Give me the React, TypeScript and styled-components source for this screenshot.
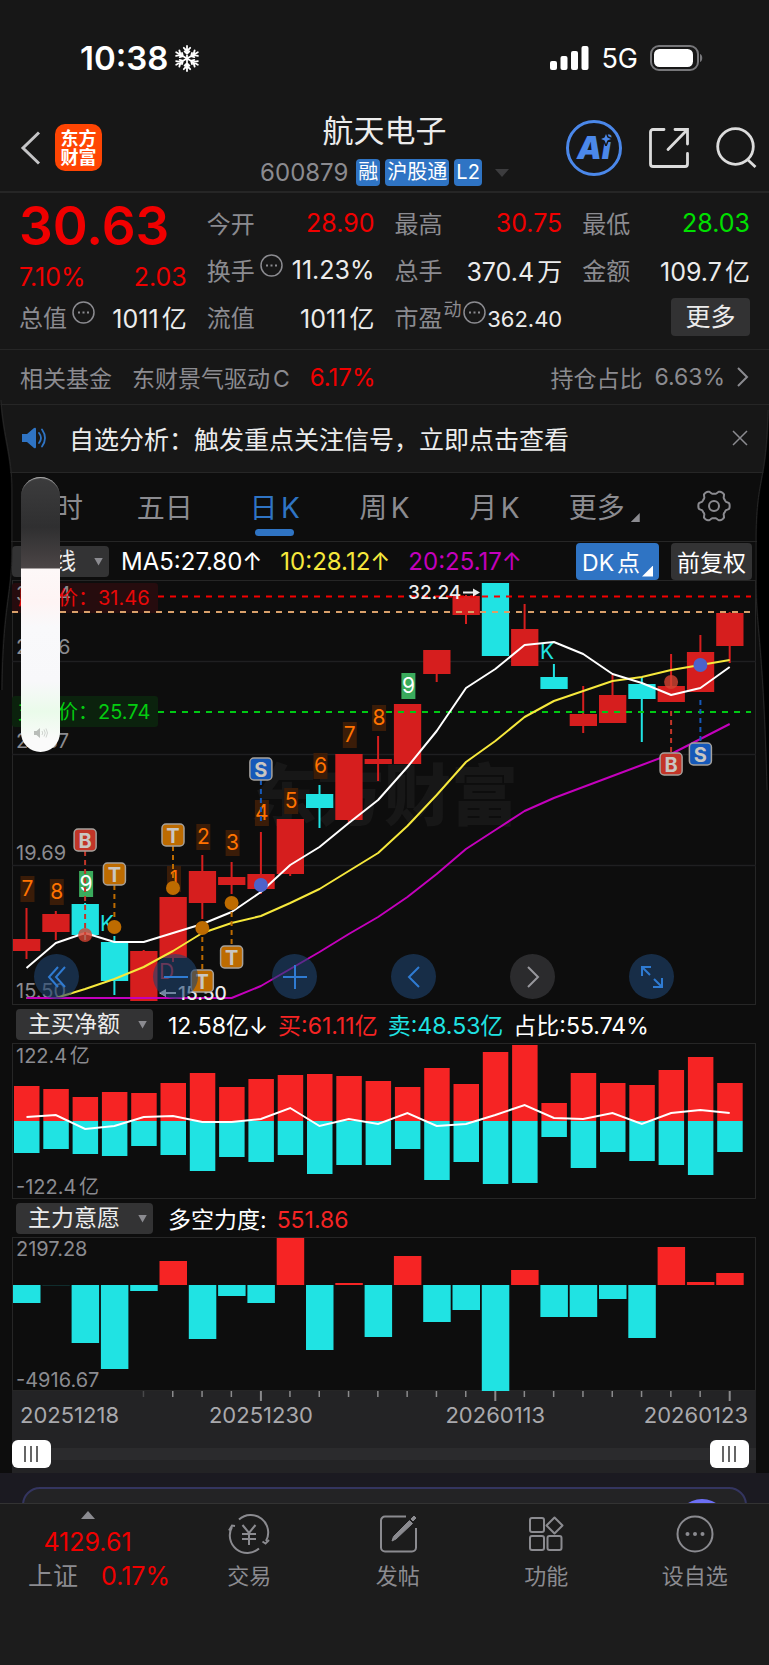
import React from 'react';
import styled, { createGlobalStyle } from 'styled-components';

const c = {
  bg: '#171717',
  chart: '#0d0d0d',
  line: '#262626',
  grid: '#1f1f21',
  muted: '#8b8b90',
  text: '#ececec',
  red: '#f00000',
  green: '#00e000',
  blue: '#2f74c4',
  candleRed: '#d61e1e',
  barRed: '#f62424',
  cyan: '#20e3e3',
  yellow: '#f6e83c',
  purple: '#c400bc',
  chip: '#333334',
};

const Global = createGlobalStyle`
  *, *::before, *::after { box-sizing: border-box; }
  html { background: #1c1c1c; }
  body { margin: 0; font-family: Inter, "Noto Sans CJK SC", sans-serif; color: ${c.text}; }
  button, select, input { font: inherit; color: inherit; margin: 0; }
  button { border: 0; padding: 0; background: none; cursor: pointer; }
  a { color: inherit; text-decoration: none; }
  svg { display: block; }
  dl, dd, dt, h1, p { margin: 0; font-weight: 400; }
`;

const Page = styled.div`
  position: relative;
  display: flex;
  flex-direction: column;
  min-height: 100vh;
  background: ${c.bg};
  overflow: hidden;
`;

/* ---------- status bar ---------- */
const StatusBar = styled.div`
  display: flex;
  align-items: center;
  height: 82px;
  padding: 34px 65px 0 80px;
  color: #fff;
`;
const Clock = styled.time`
  font-size: 33px;
  font-weight: 600;
  margin-right: 6px;
`;
const StatusRight = styled.div`
  display: flex;
  align-items: center;
  gap: 12px;
  margin-left: auto;
  font-size: 27px;
`;

/* ---------- header ---------- */
const Header = styled.header`
  display: grid;
  grid-template-columns: minmax(0, 1fr) auto minmax(0, 1fr);
  align-items: center;
  height: 111px;
  padding: 22px 12px 0 12px;
  border-bottom: 2px solid ${c.line};
`;
const HeaderSide = styled.div<{ $end?: boolean }>`
  display: flex;
  align-items: center;
  gap: ${(p) => (p.$end ? 27 : 14)}px;
  justify-content: ${(p) => (p.$end ? 'flex-end' : 'flex-start')};
  padding-left: ${(p) => (p.$end ? 0 : 8)}px;
`;
const Logo = styled.a`
  display: grid;
  place-content: center;
  width: 47px;
  height: 47px;
  border-radius: 10px;
  background: #ff4503;
  color: #fff;
  font-size: 18px;
  font-weight: 700;
  line-height: 19px;
`;
const TitleBlock = styled.div`
  display: flex;
  flex-direction: column;
  align-items: center;
  gap: 6px;
`;
const Title = styled.h1`
  font-size: 31px;
  line-height: 44px;
`;
const CodeRow = styled.div`
  display: flex;
  align-items: center;
  gap: 5px;
  font-size: 24px;
  line-height: 27px;
  color: ${c.muted};
`;
const Code = styled.span`
  margin-right: 3px;
`;
const Tag = styled.span`
  padding: 0 2px;
  border-radius: 4px;
  background: ${c.blue};
  color: #fff;
  font-size: 20px;
`;
const Caret = styled.button`
  margin-left: 8px;
`;
const AiButton = styled.button`
  position: relative;
  width: 56px;
  height: 56px;
  border: 3px solid #4b88ea;
  border-radius: 50%;
  color: #4b88ea;
  font-size: 31px;
  font-weight: 900;
  font-style: italic;
  line-height: 50px;
`;
const Spark = styled.svg`
  position: absolute;
  right: 6px;
  top: 9px;
`;

/* ---------- quote ---------- */
const Quote = styled.section`
  display: grid;
  grid-template-columns: repeat(4, minmax(0, 1fr));
  grid-auto-rows: 47px;
  column-gap: 20px;
  padding: 6px 19px 9px;
  border-bottom: 1px solid ${c.line};
`;
const PriceBlock = styled.div`
  grid-row: span 2;
  color: ${c.red};
`;
const Price = styled.div`
  font-size: 53px;
  font-weight: 600;
  line-height: 55px;
`;
const Change = styled.div`
  display: flex;
  justify-content: space-between;
  padding-top: 5px;
  font-size: 25px;
  line-height: 36px;
`;
const Stat = styled.dl`
  display: flex;
  align-items: center;
  font-size: 24px;
  white-space: nowrap;
`;
const StatLabel = styled.dt`
  display: flex;
  align-items: center;
  gap: 5px;
  color: ${c.muted};
`;
const StatValue = styled.dd<{ $color?: string; $small?: boolean }>`
  margin-left: auto;
  padding-top: ${(p) => (p.$small ? 4 : 0)}px;
  font-size: ${(p) => (p.$small ? 22 : 25)}px;
  text-autospace: normal;
  color: ${(p) => p.$color ?? c.text};
`;
const Sup = styled.sup`
  align-self: flex-start;
  margin: 2px -4px 0;
  font-size: 18px;
  line-height: 18px;
`;
const InfoButton = styled.button`
  padding-bottom: 8px;
`;
const MoreButton = styled.button`
  justify-self: end;
  align-self: center;
  width: 79px;
  height: 38px;
  border-radius: 4px;
  background: #323233;
  font-size: 25px;
  line-height: 36px;
`;

const FundRow = styled.a`
  display: flex;
  align-items: center;
  height: 55px;
  padding: 0 20px;
  border-bottom: 1px solid ${c.line};
  color: ${c.muted};
  font-size: 23px;
  text-autospace: normal;
`;
const FundName = styled.span`
  margin: 0 20px;
`;
const FundChange = styled.span`
  color: ${c.red};
  font-size: 24px;
`;
const FundShare = styled.span`
  display: flex;
  align-items: center;
  gap: 12px;
  margin-left: auto;
`;

const Notice = styled.div`
  display: flex;
  align-items: center;
  height: 68px;
  padding: 0 20px 2px;
  border-bottom: 1px solid ${c.line};
  font-size: 25px;
`;
const NoticeText = styled.p`
  flex: 1;
  margin-left: 21px;
`;

/* ---------- chart area ---------- */
const ChartArea = styled.main`
  background: ${c.chart};
`;
const Tabs = styled.nav`
  display: grid;
  grid-template-columns: repeat(7, 1fr);
  height: 69px;
  border-bottom: 1px solid ${c.line};
`;
const Tab = styled.button<{ $active?: boolean }>`
  position: relative;
  display: flex;
  align-items: center;
  justify-content: center;
  gap: 6px;
  padding-bottom: 2px;
  font-size: 28px;
  text-autospace: normal;
  color: ${(p) => (p.$active ? c.blue : c.muted)};
  &::after {
    content: '';
    display: ${(p) => (p.$active ? 'block' : 'none')};
    position: absolute;
    bottom: 5px;
    width: 39px;
    height: 7px;
    border-radius: 4px;
    background: ${c.blue};
  }
`;
const Corner = styled.i<{ $size: number }>`
  align-self: flex-end;
  width: ${(p) => p.$size}px;
  height: ${(p) => p.$size}px;
  background: currentColor;
  clip-path: polygon(100% 0, 100% 100%, 0 100%);
`;
const TabCorner = styled(Corner)`
  margin-bottom: 17px;
`;
const IndicatorRow = styled.div<{ $first?: boolean }>`
  display: flex;
  align-items: center;
  height: 38px;
  padding: 0 17px 0 ${(p) => (p.$first ? 12 : 16)}px;
  font-size: 23px;
  white-space: nowrap;
`;
const Values = styled.div<{ $wide?: boolean }>`
  display: flex;
  align-items: baseline;
  gap: ${(p) => (p.$wide ? 18 : 10)}px;
  margin-left: ${(p) => (p.$wide ? 12 : 15)}px;
  font-size: ${(p) => (p.$wide ? 24 : 23)}px;
`;
const Picker = styled.div`
  position: relative;
  &::after {
    content: '';
    position: absolute;
    right: 6px;
    top: 12px;
    width: 9px;
    height: 8px;
    background: ${c.muted};
    clip-path: polygon(0 0, 100% 0, 50% 100%);
    pointer-events: none;
  }
`;
const Select = styled.select<{ $indent: number }>`
  display: block;
  appearance: none;
  height: 31px;
  padding: 0 33px 0 ${(p) => p.$indent}px;
  border: 0;
  border-radius: 4px;
  background: ${c.chip};
  color: ${c.text};
  font-size: 23px;
  line-height: 31px;
`;
const Val = styled.span<{ $color: string }>`
  color: ${(p) => p.$color};
`;
const RowButtons = styled.div`
  display: flex;
  gap: 12px;
  margin-left: auto;
`;
const RowButton = styled.button<{ $blue?: boolean }>`
  display: flex;
  align-items: center;
  justify-content: center;
  gap: 2px;
  height: 37px;
  padding: 0 6px;
  border-radius: 4px;
  background: ${(p) => (p.$blue ? c.blue : c.chip)};
  color: #fff;
  text-autospace: normal;
`;
const ButtonCorner = styled(Corner)`
  margin-bottom: 3px;
`;
const Plot = styled.div`
  position: relative;
  margin: 0 13px 0 12px;
`;
const Drawing = styled.svg`
  width: 100%;
  height: auto;
  text-autospace: normal;
`;
const Controls = styled.div`
  position: absolute;
  left: 3%;
  right: 11%;
  bottom: 6px;
  display: flex;
  justify-content: space-between;
`;
const RoundButton = styled.button<{ $off?: boolean }>`
  display: grid;
  place-items: center;
  width: 45px;
  height: 45px;
  border-radius: 50%;
  color: ${(p) => (p.$off ? '#98989d' : '#2f7bd2')};
  background: ${(p) => (p.$off ? '#2b2b2d' : 'rgba(30, 66, 110, 0.6)')};
`;

const Axis = styled.div`
  margin: 0 13px 0 12px;
  padding-bottom: 5px;
  background: #232325;
`;
const RangeBox = styled.div`
  position: relative;
  height: 28px;
  background: linear-gradient(#2b2b2d, #2b2b2d) center / 100% 12px no-repeat;
`;
const RangeInput = styled.input`
  position: absolute;
  inset: 0;
  width: 100%;
  height: 28px;
  appearance: none;
  background: none;
  pointer-events: none;
  &::-webkit-slider-thumb {
    appearance: none;
    pointer-events: auto;
    width: 39px;
    height: 28px;
    border-radius: 6px;
    background:
      linear-gradient(#666, #666) 12px 6px / 2px 16px no-repeat,
      linear-gradient(#666, #666) 18px 6px / 2px 16px no-repeat,
      linear-gradient(#666, #666) 24px 6px / 2px 16px no-repeat,
      #fff;
  }
`;

/* ---------- below the chart ---------- */
const Promo = styled.section`
  height: 30px;
  padding: 14px 22px 0;
  background: #1b1a21;
  overflow: hidden;
`;
const PromoCard = styled.div`
  display: flex;
  justify-content: flex-end;
  height: 60px;
  padding: 10px 17px;
  border: 2px solid #343560;
  border-radius: 18px;
  background: #232325;
`;
const PromoOrb = styled.span`
  width: 52px;
  height: 52px;
  flex: none;
  border-radius: 50%;
  background: #6c6ff5;
`;

const BottomNav = styled.nav`
  display: grid;
  grid-template-columns: 175px repeat(4, minmax(0, 1fr));
  flex: 1;
  align-items: start;
  min-height: 162px;
  border-top: 1px solid #333;
  background: #1c1c1c;
  color: ${c.muted};
`;
const IndexBox = styled.a`
  display: flex;
  flex-direction: column;
  align-items: center;
  padding-top: 7px;
  font-size: 25px;
`;
const IndexValue = styled.span`
  line-height: 46px;
  color: ${c.red};
`;
const IndexRow = styled.span`
  display: flex;
  gap: 23px;
  align-self: flex-start;
  padding-left: 28px;
  line-height: 22px;
`;
const NavItem = styled.a`
  display: flex;
  flex-direction: column;
  align-items: center;
  gap: 6px;
  padding-top: 10px;
  font-size: 22px;
  line-height: 32px;
`;

/* ---------- overlays ---------- */
const BezelEdge = styled.svg<{ $right?: boolean }>`
  position: absolute;
  top: 390px;
  ${(p) => (p.$right ? 'right: 0;' : 'left: 0;')}
  pointer-events: none;
`;
const VolumeHud = styled.div`
  position: absolute;
  left: 21px;
  top: 477px;
  width: 39px;
  height: 275px;
`;
const VolumeInput = styled.input`
  display: block;
  appearance: none;
  writing-mode: vertical-lr;
  direction: rtl;
  width: 39px;
  height: 275px;
  border-radius: 20px;
  box-shadow: inset 0 2px 1px -1px rgba(255, 255, 255, 0.6);
  background: linear-gradient(
    #3c3c3d 0,
    #2f2f30 50px,
    #4b4546 91px,
    #fdf8f8 92px,
    #fef4f4 125px,
    #f9f9fb 150px,
    #f8f8fa 205px,
    #eafbea 235px,
    #fafafa 262px
  );
  &::-webkit-slider-thumb {
    appearance: none;
    width: 39px;
    height: 2px;
    background: none;
  }
`;
const VolumeIcon = styled.svg`
  position: absolute;
  left: 13px;
  bottom: 14px;
  pointer-events: none;
`;

/* ---------- chart data ---------- */
const STEP = 29.3;
const cx = (i: number) => 14.5 + i * STEP;

// [rising, body top, body bottom, wick top, wick bottom]
const candles: [number, number, number, number, number][] = [
  [1, 359, 371, 328, 379], [1, 334, 352, 331, 360], [0, 324, 355, 323, 360],
  [0, 362, 401, 356, 415], [1, 371, 421, 370, 421], [1, 317, 378, 317, 382],
  [1, 291, 323, 275, 339], [1, 297, 305, 282, 314], [1, 294, 309, 252, 314],
  [1, 239, 294, 239, 296], [0, 214, 228, 205, 248], [1, 174, 240, 174, 242],
  [1, 179, 184, 156, 201], [1, 124, 184, 124, 184], [1, 70, 94, 70, 102],
  [1, 16, 35, 15, 44], [0, 3, 76, 3, 76], [1, 49, 86, 24, 86],
  [0, 97, 109, 84, 109], [1, 134, 146, 106, 153], [1, 115, 143, 95, 143],
  [0, 104, 119, 97, 162], [1, 106, 122, 74, 122], [1, 72, 112, 55, 112],
  [1, 33, 66, 32, 83],
];
const ma5 = [388, 363, 353, 362, 362, 353, 344, 332, 312, 285, 267, 243, 220, 187, 151, 108, 89, 65, 62, 74, 94, 103, 115, 108, 87];
const ma10 = [418, 418, 409, 399, 387, 371, 353, 343, 336, 323, 309, 291, 273, 246, 215, 182, 161, 137, 121, 111, 101, 97, 90, 85, 80];
const ma20 = [418, 418, 418, 418, 418, 418, 418, 418, 406, 389, 372, 354, 337, 317, 294, 269, 250, 231, 218, 207, 196, 185, 174, 159, 144];

// [candle, digit, box top]
const counts: [number, string, number][] = [
  [0, '7', 296], [1, '8', 299], [2, '9', 291], [5, '1', 286], [6, '2', 244], [7, '3', 250],
  [8, '4', 220], [9, '5', 208], [10, '6', 173], [11, '7', 142], [12, '8', 125], [13, '9', 93],
];

// [candle, letter, badge y, dot y, dashed line from, to]
const marks: [number, 'B' | 'S' | 'T', number, number, number, number][] = [
  [2, 'B', 260, 355, 271, 355], [3, 'T', 294, 347, 305, 347], [5, 'T', 255, 308, 266, 308],
  [6, 'T', 401, 348, 348, 390], [7, 'T', 377, 323, 323, 366], [8, 'S', 189, 305, 200, 244],
  [22, 'B', 184, 102, 131, 174], [23, 'S', 174, 85, 120, 164],
];
const markFill = { B: '#c23528', S: '#1659b9', T: '#bd6b00' };
const dotFill = { B: 'rgba(214,68,50,.8)', S: '#4d62c9', T: '#bd6b00' };

const flow: [number, number][] = [
  [43, 110], [46, 106], [54, 111], [49, 113], [50, 103], [40, 112], [30, 128], [44, 114], [36, 119],
  [32, 112], [31, 131], [33, 122], [38, 122], [44, 106], [25, 137], [41, 119], [9, 141], [2, 140],
  [60, 94], [30, 125], [40, 109], [42, 118], [27, 122], [14, 132], [40, 109],
];
const flowLine = [74, 72, 86, 83, 74, 73, 79, 79, 76, 65, 83, 76, 81, 70, 83, 81, 72, 62, 75, 76, 70, 81, 70, 67, 70];
const will = [66, 48.5, 106, 132, 54, 24, 102, 59, 66, 1, 113, 46, 100, 19, 85, 73, 154, 33, 80, 80, 62, 101, 10, 45, 36];

const points = (ys: number[]) => ys.map((y, i) => `${cx(i)},${y}`).join(' ');

const Frame = ({ h }: { h: number }) => (
  <rect x="0.5" y="0.5" width="743" height={h - 1} fill="none" stroke={c.line} />
);
const AxisText = ({ y, children }: { y: number; children: string }) => (
  <text x="4" y={y} fontSize="20" fill={c.muted}>{children}</text>
);

const PriceChart = () => (
  <Drawing viewBox="0 0 744 425" role="img" aria-label="日K">
    <Frame h={425} />
    {[81.5, 174.5, 285.5].map((y) => (
      <line key={y} x1="0" x2="744" y1={y} y2={y} stroke={c.grid} strokeWidth="1.5" />
    ))}
    <text x="238" y="240" fontSize="67" fontWeight="900" fill="#171717">东方财富</text>
    <rect x="0" y="3" width="146" height="30" rx="3" fill="#260c0e" />
    <rect x="0" y="116" width="146" height="31" rx="3" fill="#0b220d" />
    <AxisText y={21}>32.24</AxisText>
    <AxisText y={74}>28.06</AxisText>
    <AxisText y={168}>23.87</AxisText>
    <AxisText y={280}>19.69</AxisText>
    <AxisText y={418}>15.50</AxisText>
    <text x="6" y="25" fontSize="20" fill="#e80808">压力价：31.46</text>
    <text x="6" y="139" fontSize="20" fill="#04cc10">支撑价：25.74</text>

    {candles.map(([up, top, bottom, high, low], i) => (
      <g key={i} fill={up ? c.candleRed : c.cyan}>
        <rect x={cx(i) - 1} y={high} width="2" height={low - high} />
        <rect x={cx(i) - 13.5} y={top} width="27.3" height={bottom - top} />
      </g>
    ))}

    <g strokeWidth="2" strokeDasharray="6 6" fill="none">
      <line x1="146" x2="739" y1="16.5" y2="16.5" stroke="#f40000" />
      <line x1="0" x2="744" y1="32" y2="32" stroke="#d9a06a" />
      <line x1="146" x2="739" y1="132" y2="132" stroke="#00c814" />
    </g>

    {counts.map(([i, digit, top]) => {
      const done = digit === '9';
      return (
        <g key={i}>
          <rect x={cx(i) - 6} y={top} width="14" height="26" fill={done ? '#3aab5c' : '#3a1c08'} />
          <text x={cx(i) + 1} y={top + 20} fontSize="21" textAnchor="middle" fill={done ? '#fff' : '#ff7300'}>
            {digit}
          </text>
        </g>
      );
    })}
    <g fontSize="21">
      <text x="88" y="351" fill={c.cyan}>K</text>
      <text x="528" y="79" fill={c.cyan}>K</text>
      <text x="147" y="399" fill="#d8283a">D</text>
    </g>

    <g fill="none" strokeWidth="2" strokeLinejoin="round">
      <polyline points={points(ma10)} stroke={c.yellow} />
      <polyline points={points(ma5)} stroke="#fff" />
      <polyline points={points(ma20)} stroke={c.purple} />
    </g>

    <g fill={c.text} stroke={c.text} fontSize="19" fontWeight="500">
      <text x="396" y="19" stroke="none">32.24</text>
      <path d="M451 12.5h12" strokeWidth="2" />
      <path d="M461 8.5l7 4-7 4z" stroke="none" />
      <text x="166" y="420" stroke="none">15.50</text>
      <path d="M152 413h12" strokeWidth="2" />
      <path d="M154 409l-7 4 7 4z" stroke="none" />
    </g>

    {marks.map(([i, letter, y, dot, from, to]) => (
      <g key={i}>
        <line x1={cx(i)} x2={cx(i)} y1={from} y2={to} stroke={markFill[letter]} strokeWidth="2" strokeDasharray="5 4" />
        <circle cx={cx(i)} cy={dot} r="7" fill={dotFill[letter]} />
        <rect x={cx(i) - 11} y={y - 11} width="22" height="22" rx="4" fill={markFill[letter]} stroke="#a5a19c" strokeWidth="1.5" />
        <text x={cx(i)} y={y + 7.5} fontSize="20" fontWeight="700" textAnchor="middle" fill="#c9c6c2">
          {letter}
        </text>
      </g>
    ))}
  </Drawing>
);

const FlowChart = () => (
  <Drawing viewBox="0 0 744 156" role="img" aria-label="主买净额">
    <Frame h={156} />
    {flow.map(([top, bottom], i) => (
      <g key={i}>
        <rect x={cx(i) - 12.5} y={top} width="25.5" height={78 - top} fill={c.barRed} />
        <rect x={cx(i) - 12.5} y="78" width="25.5" height={bottom - 78} fill={c.cyan} />
      </g>
    ))}
    <polyline points={points(flowLine)} fill="none" stroke="#fff" strokeWidth="2" />
    <AxisText y={20}>122.4亿</AxisText>
    <AxisText y={151}>-122.4亿</AxisText>
  </Drawing>
);

const WillChart = () => (
  <Drawing viewBox="0 0 744 154" role="img" aria-label="主力意愿">
    <Frame h={154} />
    {will.map((y, i) => (
      <rect
        key={i}
        x={cx(i) - 13.5}
        y={Math.min(y, 48)}
        width="27.5"
        height={Math.abs(y - 48)}
        fill={y < 48 ? c.barRed : c.cyan}
        opacity={i === 1 ? 0.3 : 1}
      />
    ))}
    <AxisText y={19}>2197.28</AxisText>
    <AxisText y={150}>-4916.67</AxisText>
  </Drawing>
);

const DateAxis = () => (
  <Drawing viewBox="0 0 744 49">
    {candles.map((_, i) =>
      i < 4 ? null : (
        <rect
          key={i}
          x={cx(i) - 1}
          y="0"
          width={i % 8 === 0 ? 2 : 1.5}
          height={i % 8 === 0 ? 10 : 6}
          fill={i === 4 ? '#48484a' : '#8a8a8c'}
        />
      ),
    )}
    <g fontSize="22" fill="#a9a9ad">
      <text x="8" y="32">20251218</text>
      <text x={cx(8)} y="32" textAnchor="middle">20251230</text>
      <text x={cx(16)} y="32" textAnchor="middle">20260113</text>
      <text x="736" y="32" textAnchor="end">20260123</text>
    </g>
  </Drawing>
);

/* ---------- small icons ---------- */
const Dots = () => (
  <svg width="23" height="23" viewBox="0 0 23 23" fill="none" stroke="currentColor" strokeWidth="1.5">
    <circle cx="11.5" cy="11.5" r="10.5" />
    <path d="M6 11.5h2M10.5 11.5h2M15 11.5h2" strokeWidth="2" />
  </svg>
);
const Info = () => (
  <InfoButton type="button" aria-label="说明">
    <Dots />
  </InfoButton>
);
const Snowflake = () => (
  <svg width="26" height="27" viewBox="0 0 26 27" fill="none" stroke="#fff" strokeWidth="1.8" strokeLinecap="round">
    {[0, 60, 120, 180, 240, 300].map((a) => (
      <path key={a} transform={`rotate(${a} 13 13.5)`} d="M13 13.5V1M9.8 2.8l3.2 3.4 3.2-3.4M10.6 6.4l2.4 2.4 2.4-2.4" />
    ))}
  </svg>
);

const gearPath = (() => {
  const pts: string[] = [];
  const n = 96;
  for (let k = 0; k < n; k++) {
    const a = (k / n) * Math.PI * 2;
    const w = Math.cos(a * 6);
    const r = 14 + 1.7 * Math.tanh(w * 2.2);
    pts.push(`${(17 + r * Math.cos(a)).toFixed(2)} ${(17 + r * Math.sin(a)).toFixed(2)}`);
  }
  return `M${pts.join('L')}Z`;
})();

type StatProps = { label: string; value: string; color?: string; info?: boolean };
const StatItem = ({ label, value, color, info }: StatProps) => (
  <Stat>
    <StatLabel>
      {label}
      {info && <Info />}
    </StatLabel>
    <StatValue $color={color}>{value}</StatValue>
  </Stat>
);

type PickerProps = { label: string; options: string[]; indent?: number };
const IndicatorPicker = ({ label, options, indent = 12 }: PickerProps) => (
  <Picker>
    <Select aria-label={label} $indent={indent}>
      {options.map((o) => (
        <option key={o}>{o}</option>
      ))}
    </Select>
  </Picker>
);

export default function App() {
  return (
    <Page>
      <Global />
      <StatusBar>
        <Clock>10:38</Clock>
        <Snowflake />
        <StatusRight>
          <svg width="39" height="24" viewBox="0 0 39 24" fill="#fff">
            <rect x="0" y="15" width="7" height="9" rx="2" />
            <rect x="10.5" y="10" width="7" height="14" rx="2" />
            <rect x="21" y="5" width="7" height="19" rx="2" />
            <rect x="31.5" y="0" width="7" height="24" rx="2" />
          </svg>
          <span>5G</span>
          <svg width="54" height="26" viewBox="0 0 54 26">
            <rect x="1" y="1" width="47" height="24" rx="8" fill="none" stroke="#77777a" strokeWidth="2" />
            <rect x="4" y="4" width="39" height="18" rx="5.5" fill="#fff" />
            <path d="M50 9c3 1 3 7 0 8z" fill="#77777a" />
          </svg>
        </StatusRight>
      </StatusBar>

      <Header>
        <HeaderSide>
          <button type="button" aria-label="返回">
            <svg width="21" height="34" viewBox="0 0 21 34" fill="none" stroke="#c4c4c6" strokeWidth="3">
              <path d="M19 1.5L3 17l16 15.5" />
            </svg>
          </button>
          <Logo href="#home">
            <span>东方</span>
            <span>财富</span>
          </Logo>
        </HeaderSide>
        <TitleBlock>
          <Title>航天电子</Title>
          <CodeRow>
            <Code>600879</Code>
            <Tag>融</Tag>
            <Tag>沪股通</Tag>
            <Tag>L2</Tag>
            <Caret type="button" aria-label="展开">
              <svg width="14" height="8" viewBox="0 0 14 8" fill="#3c3c3e">
                <path d="M0 0h14L7 8z" />
              </svg>
            </Caret>
          </CodeRow>
        </TitleBlock>
        <HeaderSide $end>
          <AiButton type="button">
            Ai
            <Spark width="14" height="14" viewBox="0 0 14 14" fill="#4b88ea" stroke={c.bg} strokeWidth="1.5">
              <path d="M7 0l2 5 5 2-5 2-2 5-2-5-5-2 5-2z" />
            </Spark>
          </AiButton>
          <button type="button" aria-label="分享">
            <svg width="40" height="40" viewBox="0 0 40 40" fill="none" stroke="#dcdcdc" strokeWidth="2.8" strokeLinecap="round">
              <path d="M15 1.5H4A2.5 2.5 0 0 0 1.5 4v32A2.5 2.5 0 0 0 4 38.5h32a2.5 2.5 0 0 0 2.5-2.5V25.5" />
              <path d="M26 1.5h12.500V16M37 3L19 21.5" />
            </svg>
          </button>
          <button type="button" aria-label="搜索">
            <svg width="41" height="41" viewBox="0 0 41 41" fill="none" stroke="#dcdcdc" strokeWidth="2.8">
              <circle cx="19.5" cy="19.5" r="17.8" />
              <path d="M31 32l8.5 8" />
            </svg>
          </button>
        </HeaderSide>
      </Header>

      <Quote>
        <PriceBlock>
          <Price>30.63</Price>
          <Change>
            <span>7.10%</span>
            <span>2.03</span>
          </Change>
        </PriceBlock>
        <StatItem label="今开" value="28.90" color={c.red} />
        <StatItem label="最高" value="30.75" color={c.red} />
        <StatItem label="最低" value="28.03" color={c.green} />
        <StatItem label="换手" value="11.23%" info />
        <StatItem label="总手" value="370.4万" />
        <StatItem label="金额" value="109.7亿" />
        <StatItem label="总值" value="1011亿" info />
        <StatItem label="流值" value="1011亿" />
        <Stat>
          <StatLabel>
            市盈
            <Sup>动</Sup>
            <Info />
          </StatLabel>
          <StatValue $small>362.40</StatValue>
        </Stat>
        <MoreButton type="button">更多</MoreButton>
      </Quote>

      <FundRow href="#fund">
        <span>相关基金</span>
        <FundName>东财景气驱动C</FundName>
        <FundChange>6.17%</FundChange>
        <FundShare>
          <span>持仓占比</span>
          <span>6.63%</span>
          <svg width="12" height="20" viewBox="0 0 12 20" fill="none" stroke="currentColor" strokeWidth="2">
            <path d="M1 1l9 9-9 9" />
          </svg>
        </FundShare>
      </FundRow>

      <Notice>
        <svg width="28" height="22" viewBox="0 0 28 22" fill={c.blue}>
          <path d="M2 7h5l7-6q2-1 2 1v18q0 2-2 1l-7-6H2z" />
          <path d="M19 6q4 5 0 10M22 2.5q6 8.5 0 17" fill="none" stroke={c.blue} strokeWidth="1.8" strokeLinecap="round" />
        </svg>
        <NoticeText>自选分析：触发重点关注信号，立即点击查看</NoticeText>
        <button type="button" aria-label="关闭">
          <svg width="18" height="16" viewBox="0 0 18 16" fill="none" stroke={c.muted} strokeWidth="1.5">
            <path d="M2 1l14 14M16 1L2 15" />
          </svg>
        </button>
      </Notice>

      <ChartArea>
        <Tabs>
          <Tab type="button">分时</Tab>
          <Tab type="button">五日</Tab>
          <Tab type="button" $active>日K</Tab>
          <Tab type="button">周K</Tab>
          <Tab type="button">月K</Tab>
          <Tab type="button">
            更多
            <TabCorner $size={9} />
          </Tab>
          <Tab type="button" aria-label="设置">
            <svg width="34" height="34" viewBox="0 0 34 34" fill="none" stroke="currentColor" strokeWidth="2">
              <path d={gearPath} />
              <circle cx="17" cy="17" r="5" />
            </svg>
          </Tab>
        </Tabs>

        <IndicatorRow $first>
          <IndicatorPicker label="主图指标" options={['均线']} indent={18} />
          <Values $wide>
            <Val $color="#fff">MA5:27.80↑</Val>
            <Val $color={c.yellow}>10:28.12↑</Val>
            <Val $color={c.purple}>20:25.17↑</Val>
          </Values>
          <RowButtons>
            <RowButton type="button" $blue>
              DK点
              <ButtonCorner $size={11} />
            </RowButton>
            <RowButton type="button">前复权</RowButton>
          </RowButtons>
        </IndicatorRow>
        <Plot>
          <PriceChart />
          <Controls>
            <RoundButton type="button" aria-label="最早">
              <svg width="20" height="22" viewBox="0 0 20 22" fill="none" stroke="currentColor" strokeWidth="2">
                <path d="M11 1L2 11l9 10M18 1L9 11l9 10" />
              </svg>
            </RoundButton>
            <RoundButton type="button" aria-label="缩小">
              <svg width="24" height="24" viewBox="0 0 24 24" stroke="currentColor" strokeWidth="2">
                <path d="M0 12h24" />
              </svg>
            </RoundButton>
            <RoundButton type="button" aria-label="放大">
              <svg width="24" height="24" viewBox="0 0 24 24" stroke="currentColor" strokeWidth="2">
                <path d="M0 12h24M12 0v24" />
              </svg>
            </RoundButton>
            <RoundButton type="button" aria-label="向前">
              <svg width="14" height="22" viewBox="0 0 14 22" fill="none" stroke="currentColor" strokeWidth="2">
                <path d="M12 1L2 11l10 10" />
              </svg>
            </RoundButton>
            <RoundButton type="button" aria-label="向后" $off>
              <svg width="14" height="22" viewBox="0 0 14 22" fill="none" stroke="currentColor" strokeWidth="2">
                <path d="M2 1l10 10L2 21" />
              </svg>
            </RoundButton>
            <RoundButton type="button" aria-label="全屏">
              <svg width="24" height="24" viewBox="0 0 24 24" fill="none" stroke="currentColor" strokeWidth="2">
                <path d="M2 11V2h9M2 2l8 8M22 13v9h-9M22 22l-8-8" />
              </svg>
            </RoundButton>
          </Controls>
        </Plot>

        <IndicatorRow>
          <IndicatorPicker label="副图指标一" options={['主买净额']} />
          <Values>
            <Val $color="#fff">12.58亿↓</Val>
            <Val $color={c.barRed}>买:61.11亿</Val>
            <Val $color={c.cyan}>卖:48.53亿</Val>
            <Val $color="#fff">占比:55.74%</Val>
          </Values>
        </IndicatorRow>
        <Plot>
          <FlowChart />
        </Plot>

        <IndicatorRow>
          <IndicatorPicker label="副图指标二" options={['主力意愿']} />
          <Values>
            <Val $color="#fff">多空力度:</Val>
            <Val $color={c.barRed}>551.86</Val>
          </Values>
        </IndicatorRow>
        <Plot>
          <WillChart />
        </Plot>

        <Axis>
          <DateAxis />
          <RangeBox>
            <RangeInput type="range" aria-label="起始日期" defaultValue={0} />
            <RangeInput type="range" aria-label="结束日期" defaultValue={99} />
          </RangeBox>
        </Axis>
      </ChartArea>

      <Promo>
        <PromoCard>
          <PromoOrb />
        </PromoCard>
      </Promo>

      <BottomNav>
        <IndexBox href="#index">
          <svg width="14" height="8" viewBox="0 0 14 8" fill="currentColor">
            <path d="M0 8L7 0l7 8z" />
          </svg>
          <IndexValue>4129.61</IndexValue>
          <IndexRow>
            <span>上证</span>
            <Val $color={c.red}>0.17%</Val>
          </IndexRow>
        </IndexBox>
        <NavItem href="#trade">
          <svg width="42" height="40" viewBox="0 0 42 40" fill="none" stroke="currentColor" strokeWidth="2">
            <path d="M11 5.5A17.5 17.5 0 0 1 38 27M31 34.5A17.5 17.5 0 0 1 4 13" />
            <path d="M1 16.500l3-5 3 .5M41 26l-3.5 3.5-3-2" />
            <path d="M14.500 11l6.500 8 6.500-8M21 19v12M14 20h14M14 25h14" />
          </svg>
          交易
        </NavItem>
        <NavItem href="#post">
          <svg width="40" height="40" viewBox="0 0 40 40" fill="none" stroke="currentColor" strokeWidth="2">
            <path d="M28 2.5H7a4 4 0 0 0-4 4v27a4 4 0 0 0 4 4h27a4 4 0 0 0 4-4V14" />
            <path d="M33 5l3-3 2 2-3 3zM31.5 6.5l3 3L18 25l-4 2 1.5-4.5z" fill="currentColor" strokeWidth="1" />
          </svg>
          发帖
        </NavItem>
        <NavItem href="#features">
          <svg width="40" height="40" viewBox="0 0 40 40" fill="none" stroke="currentColor" strokeWidth="2">
            <rect x="4" y="4" width="14" height="14" rx="2" />
            <path d="M28.5 3.5l8 8-8 8-8-8z" strokeLinejoin="round" />
            <rect x="4" y="22" width="14" height="14" rx="2" />
            <rect x="21.5" y="22" width="14" height="14" rx="2" />
          </svg>
          功能
        </NavItem>
        <NavItem href="#watch">
          <svg width="40" height="40" viewBox="0 0 40 40" fill="none" stroke="currentColor" strokeWidth="2">
            <circle cx="20" cy="20" r="17.5" />
            <g fill="currentColor" stroke="none">
              <circle cx="12.5" cy="20" r="2" />
              <circle cx="20" cy="20" r="2" />
              <circle cx="27.5" cy="20" r="2" />
            </g>
          </svg>
          设自选
        </NavItem>
      </BottomNav>

      <BezelEdge width="14" height="310" viewBox="0 0 14 310">
        <path d="M0 10C3 50 11 65 11 100V160C11 205 2 215 1 300H0z" fill="#000" />
        <path d="M1 10C4 50 12 65 12 100V160C12 205 3 215 2 300" fill="none" stroke="#252525" />
      </BezelEdge>
      <BezelEdge $right width="14" height="420" viewBox="0 0 14 420">
        <path d="M14 20C12 95 3 85 2 145V190C2 240 9 250 13 400H14z" fill="#000" />
        <path d="M13 20C11 95 2 85 1 145V190C1 240 8 250 12 400" fill="none" stroke="#252525" />
      </BezelEdge>
      <VolumeHud>
        <VolumeInput type="range" aria-label="音量" defaultValue={67} />
        <VolumeIcon width="14" height="10" viewBox="0 0 14 10" fill="#b9bdb9">
          <path d="M0 3h2.5L6 0v10L2.5 7H0z" />
          <path d="M8 3q1.5 2 0 4M10 1.5q2.5 3.5 0 7M12 .5q3 4.5 0 9" fill="none" stroke="#cfd3cf" />
        </VolumeIcon>
      </VolumeHud>
    </Page>
  );
}
